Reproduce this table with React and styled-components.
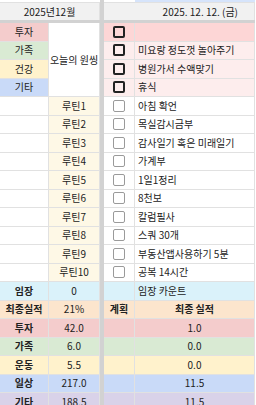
import React from "react";
import styled, { createGlobalStyle } from "styled-components";

const Global = createGlobalStyle`
  html, body { margin: 0; padding: 0; background: #ffffff; }
  body { font-family: "Noto Sans CJK KR", "Noto Sans", sans-serif; color: #222; }
`;

const Sheet = styled.div`
  display: grid;
  grid-template-columns: 49px 51px 4px 31px 120px;
  grid-template-rows: 3px 17px 3px repeat(21, 18.5px);
  width: 255px;
  height: 405px;
  overflow: hidden;
  font-size: 10px;
  line-height: 1;
`;

const Cell = styled.div`
  box-sizing: border-box;
  display: flex;
  align-items: center;
  justify-content: ${(p) =>
    p.$align === "left" ? "flex-start" : p.$align === "right" ? "flex-end" : "center"};
  padding: ${(p) => (p.$align === "left" ? "0 0 0 3px" : p.$align === "right" ? "0 16px 0 0" : "0")};
  background: ${(p) => p.$bg || "#ffffff"};
  border-right: 1px solid #e1e1e1;
  border-bottom: 1px solid #e1e1e1;
  font-weight: ${(p) => (p.$bold ? 700 : 400)};
  white-space: nowrap;
  overflow: hidden;
  grid-column: ${(p) => (p.$span ? `span ${p.$span}` : "auto")};
  grid-row: ${(p) => (p.$rows ? `span ${p.$rows}` : "auto")};
`;

const TopStrip = styled.div`
  background: ${(p) => p.$bg || "#ffffff"};
  border-bottom: 1px solid #e1e1e1;
  box-sizing: border-box;
  grid-column: ${(p) => (p.$span ? `span ${p.$span}` : "auto")};
`;

const Header = styled(Cell)`
  background: #f1f1f1;
  border-bottom: none;
`;

const VSep = styled.div`
  background: #d2d2d2;
  grid-column: 3;
  grid-row: 1 / -1;
`;

const HSep = styled.div`
  background: #d2d2d2;
  grid-column: 1 / -1;
  grid-row: 3;
`;

const Box = styled.span`
  box-sizing: border-box;
  width: 12px;
  height: 12px;
  border-radius: 2px;
  border: ${(p) => (p.$strong ? "2px solid #222" : "1.5px solid #9a9a9a")};
  background: ${(p) => (p.$strong ? "transparent" : "#ffffff")};
`;

const C = {
  pink: "#f4cccc",
  green: "#d9ead3",
  yellow: "#fff2cc",
  blue: "#c9daf8",
  purple: "#d9d2e9",
  orange: "#fce5cd",
  cyan: "#daf2fa",
  cream: "#fef8e6",
  rowPink: "#fdd6d6",
  lightPink: "#fdeded",
};

const topRows = [
  { label: "투자", bg: C.pink, task: "", rowBg: C.rowPink },
  { label: "가족", bg: C.green, task: "미요랑 정도껏 놀아주기", rowBg: C.lightPink },
  { label: "건강", bg: C.yellow, task: "병원가서 수액맞기", rowBg: C.lightPink },
  { label: "기타", bg: C.blue, task: "휴식", rowBg: C.lightPink },
];

const routines = [
  "아침 확언",
  "목실감시금부",
  "감사일기 혹은 미래일기",
  "가계부",
  "1일1정리",
  "8천보",
  "칼럼필사",
  "스쿼 30개",
  "부동산앱사용하기 5분",
  "공복 14시간",
];

const results = [
  { label: "투자", bg: C.pink, plan: "42.0", actual: "1.0" },
  { label: "가족", bg: C.green, plan: "6.0", actual: "0.0" },
  { label: "운동", bg: C.yellow, plan: "5.5", actual: "0.0" },
  { label: "일상", bg: C.blue, plan: "217.0", actual: "11.5" },
  { label: "기타", bg: C.purple, plan: "188.5", actual: "11.5" },
];

export default function App() {
  return (
    <>
      <Global />
      <Sheet>
        <VSep />
        <HSep />

        <TopStrip $span={2} />
        <TopStrip />
        <TopStrip $bg="#d6e4fb" />

        <Header $span={2}>2025년12월</Header>
        <Header $span={2} $align="right">2025. 12. 12. (금)</Header>

        {topRows.map((r, i) => (
          <React.Fragment key={r.label}>
            <Cell $bg={r.bg}>{r.label}</Cell>
            {i === 0 && <Cell $rows={4}>오늘의 원씽</Cell>}
            <Cell $bg={r.rowBg}>
              <Box $strong />
            </Cell>
            <Cell $bg={r.rowBg} $align="left">{r.task}</Cell>
          </React.Fragment>
        ))}

        {routines.map((t, i) => (
          <React.Fragment key={t}>
            <Cell />
            <Cell $bg={C.cream}>{`루틴${i + 1}`}</Cell>
            <Cell>
              <Box />
            </Cell>
            <Cell $align="left">{t}</Cell>
          </React.Fragment>
        ))}

        <Cell $bg={C.cyan} $bold>임장</Cell>
        <Cell $bg={C.cyan}>0</Cell>
        <Cell $bg={C.cyan} />
        <Cell $bg={C.cyan} $align="left">임장 카운트</Cell>

        <Cell $bg={C.orange} $bold>최종실적</Cell>
        <Cell $bg={C.orange}>21%</Cell>
        <Cell $bg={C.orange} $bold>계획</Cell>
        <Cell $bg={C.orange} $bold>최종 실적</Cell>

        {results.map((r) => (
          <React.Fragment key={r.label}>
            <Cell $bg={r.bg} $bold>{r.label}</Cell>
            <Cell $bg={r.bg}>{r.plan}</Cell>
            <Cell $bg={r.bg} />
            <Cell $bg={r.bg}>{r.actual}</Cell>
          </React.Fragment>
        ))}
      </Sheet>
    </>
  );
}
